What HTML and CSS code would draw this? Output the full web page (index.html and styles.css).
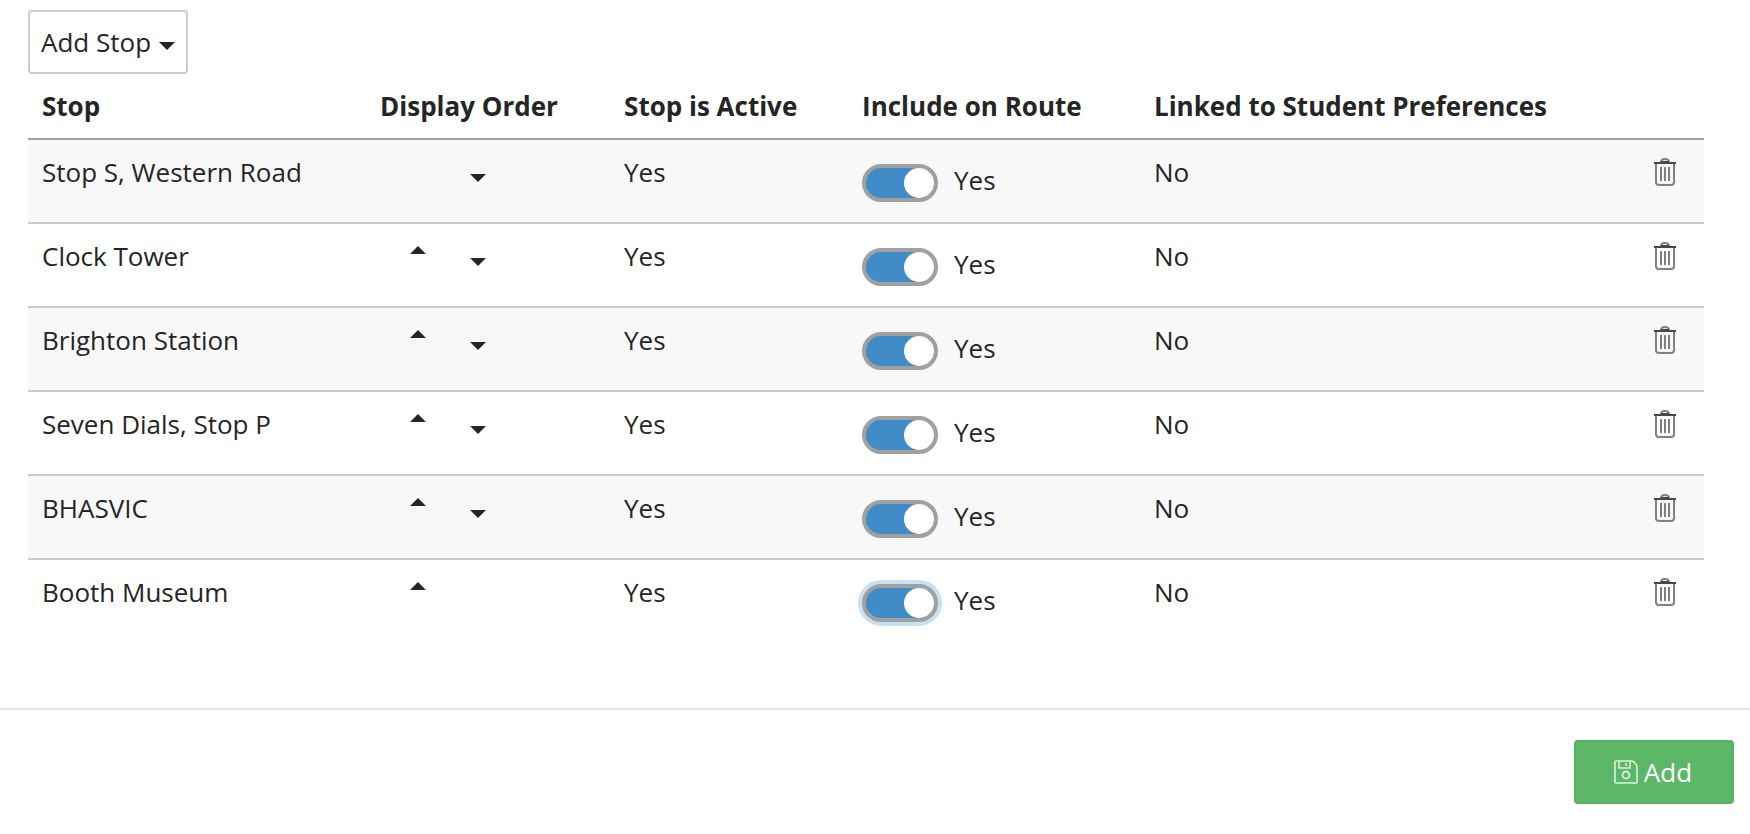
FILE: index.html
```html
<!DOCTYPE html>
<html lang="en">
<head>
<meta charset="utf-8">
<title>Route stops</title>
<link rel="stylesheet" href="styles.css">
</head>
<body>
<svg class="sprite" aria-hidden="true">
  <symbol id="trash" viewBox="0 0 24 28">
    <path d="M3 5V24Q3 27 6 27H18Q21 27 21 24V5" fill="none" stroke="#808080" stroke-width="2"/>
    <path d="M8 4Q8 1 12 1T16 4" fill="none" stroke="#808080" stroke-width="2"/>
    <path d="M1 5H23M8 4H16" fill="none" stroke="#484848" stroke-width="2"/>
    <path d="M8 9V23M12 9V23M16 9V23" fill="none" stroke="#606060" stroke-width="1.600"/>
  </symbol>
</svg>
<main class="content">
  <button class="btn btn-default" type="button">Add Stop <span class="caret caret-down"></span></button>
  <table class="stops">
    <colgroup>
      <col class="col-stop"><col class="col-order"><col class="col-active"><col class="col-include"><col class="col-linked"><col class="col-delete">
    </colgroup>
    <thead>
      <tr><th scope="col">Stop</th><th scope="col">Display Order</th><th scope="col">Stop is Active</th><th scope="col">Include on Route</th><th scope="col">Linked to Student Preferences</th><td></td></tr>
    </thead>
    <tbody>
      <tr>
        <td>Stop S, Western Road</td>
        <td><div class="order"><span></span><button class="move" type="button" aria-label="Move down"><span class="caret caret-down"></span></button></div></td>
        <td>Yes</td>
        <td><label class="switch"><input type="checkbox" checked>Yes</label></td>
        <td>No</td>
        <td class="actions"><button class="delete" type="button" aria-label="Delete"><svg class="trash"><use href="#trash"/></svg></button></td>
      </tr>
      <tr>
        <td>Clock Tower</td>
        <td><div class="order"><button class="move move-up" type="button" aria-label="Move up"><span class="caret caret-up"></span></button><button class="move" type="button" aria-label="Move down"><span class="caret caret-down"></span></button></div></td>
        <td>Yes</td>
        <td><label class="switch"><input type="checkbox" checked>Yes</label></td>
        <td>No</td>
        <td class="actions"><button class="delete" type="button" aria-label="Delete"><svg class="trash"><use href="#trash"/></svg></button></td>
      </tr>
      <tr>
        <td>Brighton Station</td>
        <td><div class="order"><button class="move move-up" type="button" aria-label="Move up"><span class="caret caret-up"></span></button><button class="move" type="button" aria-label="Move down"><span class="caret caret-down"></span></button></div></td>
        <td>Yes</td>
        <td><label class="switch"><input type="checkbox" checked>Yes</label></td>
        <td>No</td>
        <td class="actions"><button class="delete" type="button" aria-label="Delete"><svg class="trash"><use href="#trash"/></svg></button></td>
      </tr>
      <tr>
        <td>Seven Dials, Stop P</td>
        <td><div class="order"><button class="move move-up" type="button" aria-label="Move up"><span class="caret caret-up"></span></button><button class="move" type="button" aria-label="Move down"><span class="caret caret-down"></span></button></div></td>
        <td>Yes</td>
        <td><label class="switch"><input type="checkbox" checked>Yes</label></td>
        <td>No</td>
        <td class="actions"><button class="delete" type="button" aria-label="Delete"><svg class="trash"><use href="#trash"/></svg></button></td>
      </tr>
      <tr>
        <td>BHASVIC</td>
        <td><div class="order"><button class="move move-up" type="button" aria-label="Move up"><span class="caret caret-up"></span></button><button class="move" type="button" aria-label="Move down"><span class="caret caret-down"></span></button></div></td>
        <td>Yes</td>
        <td><label class="switch"><input type="checkbox" checked>Yes</label></td>
        <td>No</td>
        <td class="actions"><button class="delete" type="button" aria-label="Delete"><svg class="trash"><use href="#trash"/></svg></button></td>
      </tr>
      <tr>
        <td>Booth Museum</td>
        <td><div class="order"><button class="move move-up" type="button" aria-label="Move up"><span class="caret caret-up"></span></button></div></td>
        <td>Yes</td>
        <td><label class="switch"><input class="is-focused" type="checkbox" checked>Yes</label></td>
        <td>No</td>
        <td class="actions"><button class="delete" type="button" aria-label="Delete"><svg class="trash"><use href="#trash"/></svg></button></td>
      </tr>
    </tbody>
  </table>
</main>
<footer class="footer">
  <button class="btn btn-success" type="button">
    <svg class="save" viewBox="0 0 24 24" aria-hidden="true"><path d="M2 1H18Q23 3 23 8V22Q23 23 22 23H2Q1 23 1 22V2Q1 1 2 1ZM5 1V8H16V1M12 3V6" fill="none" stroke="currentColor" stroke-width="1.600"/><circle cx="12" cy="15" r="3.500" fill="none" stroke="currentColor" stroke-width="1.800"/></svg>
    Add
  </button>
</footer>
</body>
</html>
```
FILE: styles.css
```css
* {
  box-sizing: border-box;
}

body {
  margin: 0;
  background: #fff;
  color: #252525;
  font: 26px/36px "Open Sans", "Noto Sans", sans-serif;
}

button {
  font: inherit;
  color: inherit;
  cursor: pointer;
}

.sprite {
  display: none;
}

.content {
  padding: 10px 46px 66px 28px;
}

.btn {
  display: flex;
  align-items: center;
  justify-content: center;
  gap: 8px;
  width: 160px;
  height: 64px;
  padding: 0;
  border: 2px solid #ccc;
  border-radius: 4px;
  background: #fff;
}

.btn-default .caret {
  margin-top: 8px;
}

.btn-success {
  gap: 6px;
  padding-right: 2px;
  border-color: #54b360;
  background: #5cb868;
  color: #fff;
}

.save {
  width: 24px;
  height: 24px;
  opacity: 0.8;
}

.caret {
  display: block;
  border: 0 solid transparent;
  border-width: 0 8px;
}

.caret-down {
  border-top: 8px solid #252525;
}

.caret-up {
  border-bottom: 8px solid #252525;
}

.stops {
  width: 100%;
  table-layout: fixed;
  border-collapse: separate;
  border-spacing: 0;
}

.col-stop { width: 20.170%; }
.col-order { width: 14.560%; }
.col-active { width: 14.200%; }
.col-include { width: 17.420%; }
.col-linked { width: 26%; }

th,
td {
  padding: 14px 14px 0;
  text-align: left;
  vertical-align: top;
}

thead th {
  height: 64px;
}

tbody td {
  height: 84px;
  border-top: 2px solid #ccc;
}

tbody tr:first-child td {
  border-top-color: #a0a0a0;
}

tbody tr:nth-child(odd) {
  background: #f8f8f8;
}

tbody tr:last-child {
  background: #fff;
}

.order {
  display: grid;
  grid-template-columns: 60px 60px;
  align-items: start;
  padding-left: 8px;
}

.move {
  display: flex;
  justify-content: center;
  padding: 20px 0 0;
  border: 0;
  background: none;
}

.move-up {
  padding-top: 8px;
}

.switch {
  display: flex;
  align-items: flex-start;
  gap: 16px;
  padding-top: 8px;
}

.switch input {
  appearance: none;
  display: flex;
  justify-content: flex-end;
  width: 76px;
  height: 38px;
  margin: 2px 0 0;
  border: 4px solid #a0a0a0;
  border-radius: 20px;
  background: #3f8cc8;
}

.switch input::before {
  content: "";
  width: 30px;
  height: 30px;
  border-radius: 50%;
  background: #fff;
}

.switch .is-focused {
  box-shadow: 0 0 0 4px #c8e0f4;
}

.actions {
  text-align: right;
  padding-right: 27px;
}

.delete {
  display: inline-block;
  padding: 4px 0 0;
  border: 0;
  background: none;
  line-height: 0;
}

.trash {
  width: 24px;
  height: 28px;
}

.footer {
  display: flex;
  justify-content: flex-end;
  padding: 30px 16px;
  border-top: 2px solid #e5e5e5;
}
```
